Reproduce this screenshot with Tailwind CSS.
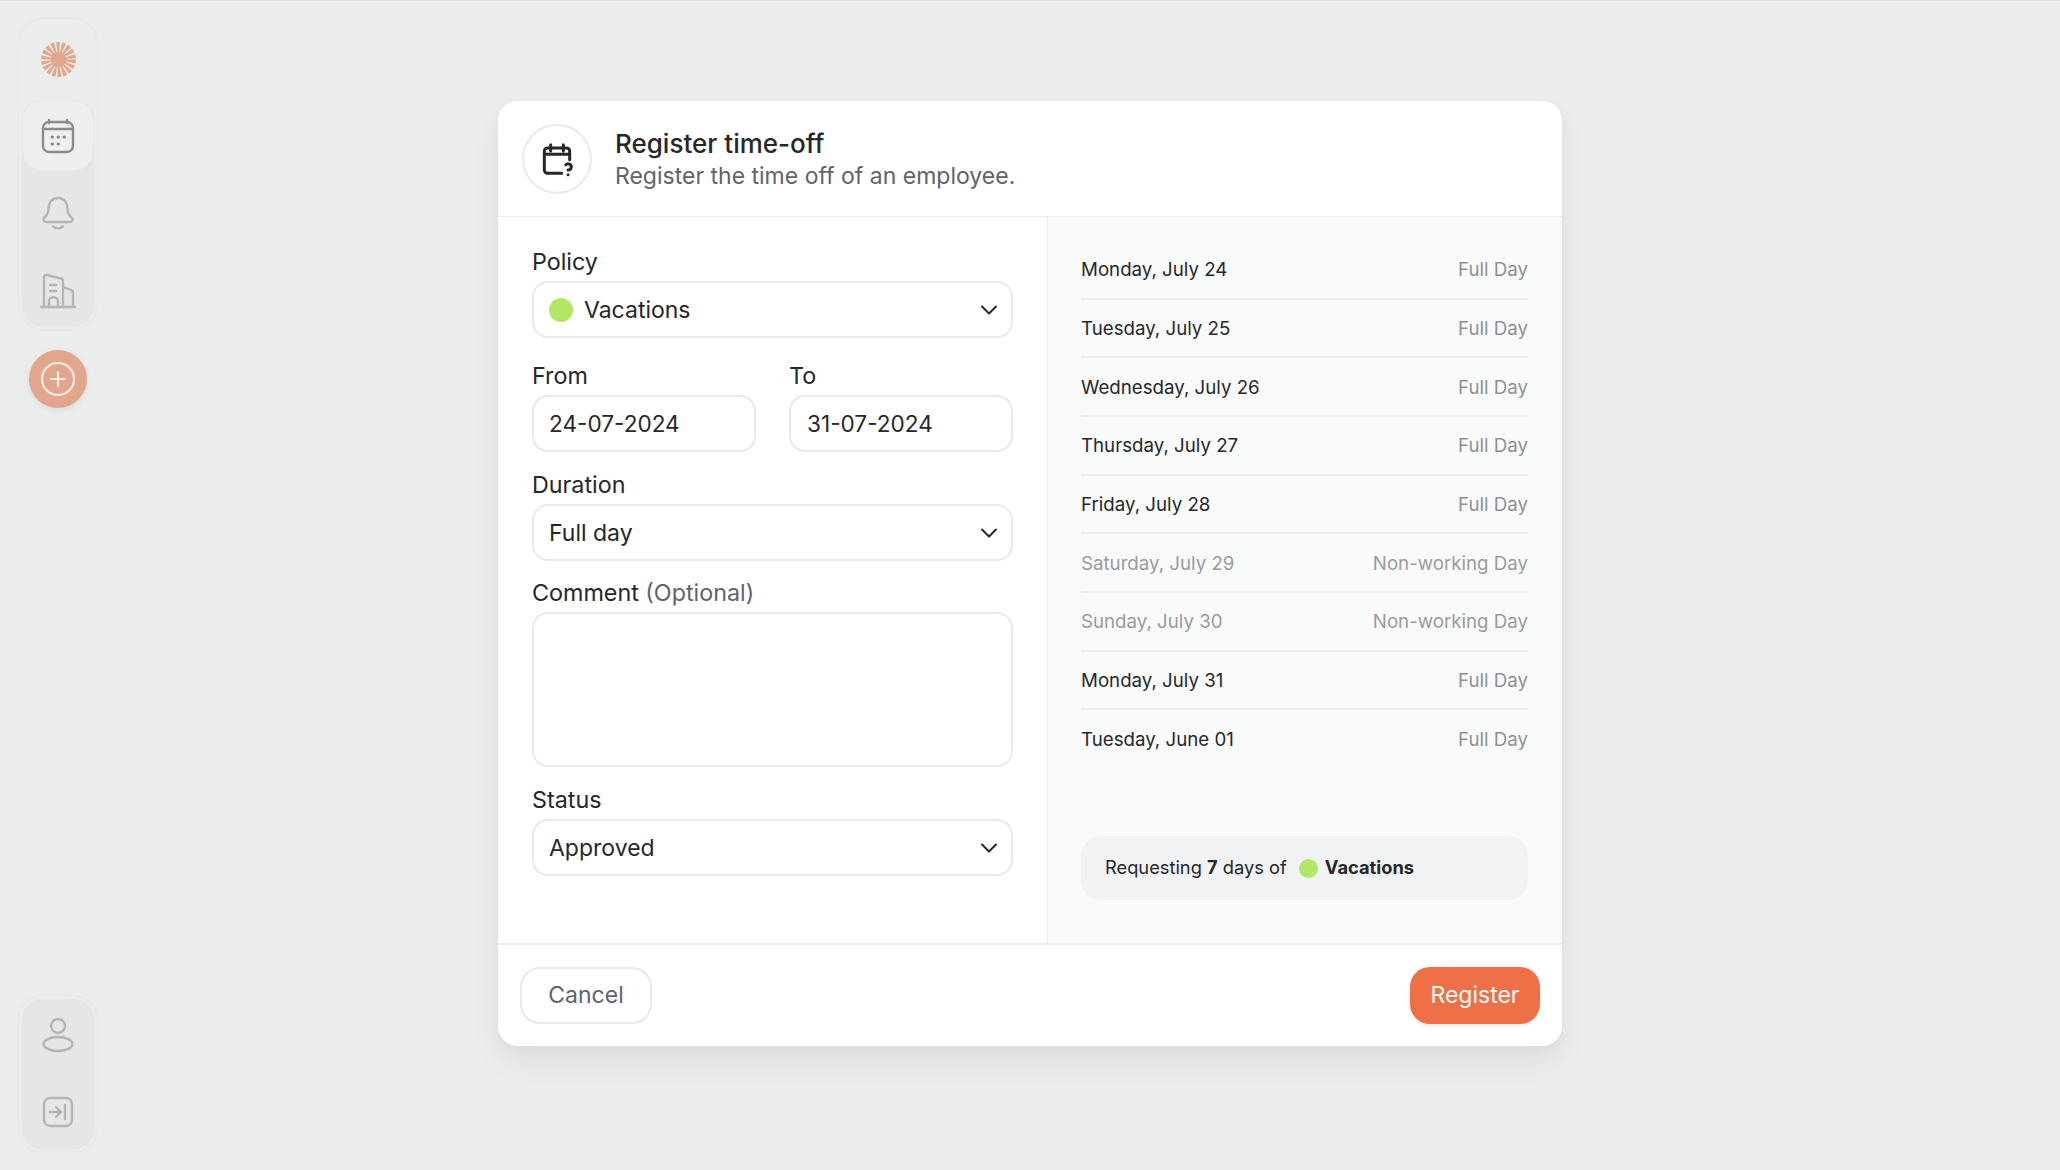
<!DOCTYPE html>
<html lang="en">
  <head>
    <meta charset="UTF-8" />
    <meta name="viewport" content="width=device-width, initial-scale=1.0" />
    <title>Register time-off</title>
    <script src="https://cdn.jsdelivr.net/npm/@tailwindcss/browser@4"></script>
  </head>
  <body class="bg-[#ebedec] text-[#27272a] font-['Inter',sans-serif]">
    <div class="relative h-[1170px] w-full overflow-hidden border-t border-[#e2e3e3]">
      <!-- Sidebar -->
      <aside class="flex h-full w-[115px] flex-col justify-between pt-[16px] pb-[16px] pl-[17px]">
        <div class="flex w-[82px] flex-col gap-[19px]">
          <div class="h-[314px] rounded-[28px] border-2 border-[#e8e9e9] p-[3px]">
            <div class="flex h-[78px] items-center justify-center pb-[4px]">
              <svg class="h-[35px] w-[35px]" viewBox="0 0 36 36" fill="none">
                <circle cx="18" cy="18" r="10.5" stroke="#e3a68c" stroke-width="15" stroke-dasharray="2.4 1.267" />
                <circle cx="18" cy="18" r="8" fill="#e3a68c" />
              </svg>
            </div>
            <div class="h-[226px] rounded-[20px] bg-[#e5e6e6]">
              <div class="flex h-[71px] items-center justify-center rounded-[20px] border border-[#e8e9e9] bg-[#eef0ef]">
                <svg class="h-[36px] w-[36px]" viewBox="0 0 36 36" fill="none" stroke="#8a8b8e" stroke-width="2.4" stroke-linecap="round">
                  <rect x="3" y="4" width="30" height="30" rx="6" />
                  <path d="M3 11h30M9 2v3M27 2v3" />
                  <path d="M12 19h.5M18 19h.5M24 19h.5M12 26h.5M18 26h.5" stroke-width="3" />
                </svg>
              </div>
              <div class="flex h-[84px] items-center justify-center">
                <svg class="h-[36px] w-[36px]" viewBox="0 0 36 36" fill="none" stroke="#b4b5b5" stroke-width="2.4" stroke-linecap="round" stroke-linejoin="round">
                  <path d="M18 3c-6.500 0-9.500 5-9.500 10.500 0 5-1.500 7-4.500 9.500-1.500 1.500-.5 4 2 4h24c2.500 0 3.500-2.500 2-4-3-2.500-4.500-4.500-4.500-9.500C27.500 8 24.500 3 18 3z" />
                  <path d="M13 31.500c3 2.500 7 2.500 10 0" />
                </svg>
              </div>
              <div class="flex h-[71px] items-center justify-center">
                <svg class="h-[38px] w-[38px]" viewBox="0 0 38 38" fill="none" stroke="#b4b5b5" stroke-width="2.4" stroke-linecap="round" stroke-linejoin="round">
                  <path d="M2 35h34M5 35V5c0-1.500 1-2.500 3-2l14 3.500c1.500.4 2 1.500 2 3V35M24 15l8 3c1.500.5 2 1.500 2 3v14" />
                  <path d="M11 13h6M11 19h6M10 35v-6c0-5 9-5 9 0v6" />
                </svg>
              </div>
            </div>
          </div>
          <button class="ml-[12px] flex h-[58px] w-[58px] items-center justify-center rounded-full bg-[#e3a68c] shadow-[0_2px_6px_rgba(0,0,0,0.08)]">
            <svg class="h-[36px] w-[36px]" viewBox="0 0 36 36" fill="none" stroke="#f6ece6" stroke-width="2.2" stroke-linecap="round">
              <circle cx="18" cy="18" r="16" />
              <path d="M18 11v14M11 18h14" />
            </svg>
          </button>
        </div>
        <div class="h-[160px] w-[82px] rounded-[28px] border-2 border-[#e8e9e9] p-[3px]">
          <div class="flex h-full flex-col items-center rounded-[20px] bg-[#e5e6e6]">
            <div class="flex h-[72px] items-center justify-center">
              <svg class="h-[38px] w-[38px]" viewBox="0 0 38 38" fill="none" stroke="#b4b5b5" stroke-width="2.4">
                <circle cx="19" cy="10" r="7" />
                <ellipse cx="19" cy="28" rx="14.500" ry="7" />
              </svg>
            </div>
            <div class="flex h-[78px] items-center justify-center pt-[3px]">
              <svg class="h-[32px] w-[32px]" viewBox="0 0 32 32" fill="none" stroke="#b4b5b5" stroke-width="2.4" stroke-linecap="round" stroke-linejoin="round">
                <rect x="2" y="2" width="28" height="28" rx="6" />
                <path d="M8 16h11M14 11l5 5-5 5M23 9v14" />
              </svg>
            </div>
          </div>
        </div>
      </aside>

      <!-- Modal -->
      <div class="absolute inset-0 flex justify-center pt-[100px]">
        <div class="flex h-[945px] w-[1064px] flex-col overflow-hidden rounded-[20px] bg-white shadow-[0_16px_30px_rgba(0,0,0,0.05),0_4px_12px_rgba(0,0,0,0.03)]">
          <div class="flex h-[116px] items-center gap-[23px] border-b border-[#ebecec] pl-[24px]">
            <div class="flex h-[70px] w-[70px] items-center justify-center rounded-full border-2 border-[#e8e9e9]">
              <svg class="h-[38px] w-[38px]" viewBox="0 0 24 24" fill="none" stroke="#27272a" stroke-width="1.9" stroke-linecap="round" stroke-linejoin="round">
                <path d="M15 21h-9a2 2 0 0 1 -2 -2v-12a2 2 0 0 1 2 -2h12a2 2 0 0 1 2 2v5.500" />
                <path d="M16 3v4M8 3v4M4 9h16M19 22v.01" />
                <path d="M19 19a2 2 0 0 0 .9 -3.800a2 2 0 0 0 -2.400 .5" />
              </svg>
            </div>
            <div class="flex flex-col pt-[2px]">
              <h1 class="text-[26px] leading-[32px] font-medium">Register time-off</h1>
              <p class="text-[23px] leading-[32px] text-[#62626b]">Register the time off of an employee.</p>
            </div>
          </div>

          <div class="flex flex-1">
            <!-- Form -->
            <form class="flex w-[550px] flex-col gap-[13px] border-r border-[#ebecec] px-[34px] pt-[27px] text-[23px]">
              <div>
                <label class="block h-[37px] text-[23.3px] leading-[36px]">Policy</label>
                <button type="button" class="flex h-[57px] w-full items-center justify-between rounded-[16px] border-2 border-[#e8e9e9] pt-[1px] pr-[12px] pl-[15px]">
                  <span class="flex items-center gap-[11px]"><span class="h-[24px] w-[24px] rounded-full bg-[#b0e864]"></span>Vacations</span>
                  <svg class="h-[20px] w-[20px]" viewBox="0 0 20 20" fill="none" stroke="#27272a" stroke-width="2" stroke-linecap="round" stroke-linejoin="round"><path d="M3 6.500l7 7 7-7" /></svg>
                </button>
              </div>
              <div class="mt-[7px] flex gap-[33px]">
                <div class="w-[224px]">
                  <label class="block h-[37px] text-[23.3px] leading-[36px]">From</label>
                  <input value="24-07-2024" class="h-[57px] w-full rounded-[16px] border-2 border-[#e8e9e9] px-[15px] text-[22.6px]" />
                </div>
                <div class="flex-1">
                  <label class="block h-[37px] text-[23.3px] leading-[36px]">To</label>
                  <input value="31-07-2024" class="h-[57px] w-full rounded-[16px] border-2 border-[#e8e9e9] px-[16px] text-[22.6px]" />
                </div>
              </div>
              <div class="mt-[2px]">
                <label class="block h-[37px] text-[23.3px] leading-[36px]">Duration</label>
                <button type="button" class="flex h-[57px] w-full items-center justify-between rounded-[16px] border-2 border-[#e8e9e9] pt-[1px] pr-[12px] pl-[15px]">
                  Full day
                  <svg class="h-[20px] w-[20px]" viewBox="0 0 20 20" fill="none" stroke="#27272a" stroke-width="2" stroke-linecap="round" stroke-linejoin="round"><path d="M3 6.500l7 7 7-7" /></svg>
                </button>
              </div>
              <div class="mt-[1px]">
                <label class="block h-[37px] text-[23.3px] leading-[36px]">Comment <span class="text-[#62626b]">(Optional)</span></label>
                <textarea class="block h-[155px] w-full resize-none rounded-[16px] border-2 border-[#e8e9e9]"></textarea>
              </div>
              <div class="mt-[2px]">
                <label class="block h-[37px] text-[23.3px] leading-[36px]">Status</label>
                <button type="button" class="flex h-[57px] w-full items-center justify-between rounded-[16px] border-2 border-[#e8e9e9] pt-[1px] pr-[12px] pl-[15px]">
                  Approved
                  <svg class="h-[20px] w-[20px]" viewBox="0 0 20 20" fill="none" stroke="#27272a" stroke-width="2" stroke-linecap="round" stroke-linejoin="round"><path d="M3 6.500l7 7 7-7" /></svg>
                </button>
              </div>
            </form>

            <!-- Day list -->
            <div class="flex flex-1 flex-col bg-[#f9fafa] pt-[24px] pr-[34px] pl-[33px] text-[18.7px]">
              <ul class="flex-1 [&>li]:flex [&>li]:h-[58.670px] [&>li]:items-center [&>li]:justify-between [&>li]:border-b-2 [&>li]:border-[#ebecec] [&>li]:pt-[2px]">
                <li>Monday, July 24<span class="text-[#8f9095]">Full Day</span></li>
                <li>Tuesday, July 25<span class="text-[#8f9095]">Full Day</span></li>
                <li>Wednesday, July 26<span class="text-[#8f9095]">Full Day</span></li>
                <li>Thursday, July 27<span class="text-[#8f9095]">Full Day</span></li>
                <li>Friday, July 28<span class="text-[#8f9095]">Full Day</span></li>
                <li class="text-[#9a9b9f]">Saturday, July 29<span>Non-working Day</span></li>
                <li class="text-[#9a9b9f]">Sunday, July 30<span>Non-working Day</span></li>
                <li>Monday, July 31<span class="text-[#8f9095]">Full Day</span></li>
                <li class="border-transparent!">Tuesday, June 01<span class="text-[#8f9095]">Full Day</span></li>
              </ul>
              <div class="mb-[43px] flex h-[64px] items-center rounded-[20px] bg-[#f1f2f3] pl-[24px] text-[18.3px]">
                Requesting&nbsp;<b class="font-bold">7</b>&nbsp;days of
                <span class="mr-[7px] ml-[12px] h-[19px] w-[19px] rounded-full bg-[#b0e864]"></span>
                <b class="font-bold">Vacations</b>
              </div>
            </div>
          </div>

          <div class="flex h-[103px] items-center justify-between border-t-2 border-[#ebecec] px-[22px] text-[23px]">
            <button class="h-[57px] w-[132px] rounded-[20px] border-2 border-[#e8e9e9] text-[#62626b]">Cancel</button>
            <button class="h-[57px] w-[130px] rounded-[20px] bg-[#ef7047] text-white shadow-[0_2px_4px_rgba(0,0,0,0.08)]">Register</button>
          </div>
        </div>
      </div>
    </div>
  </body>
</html>
